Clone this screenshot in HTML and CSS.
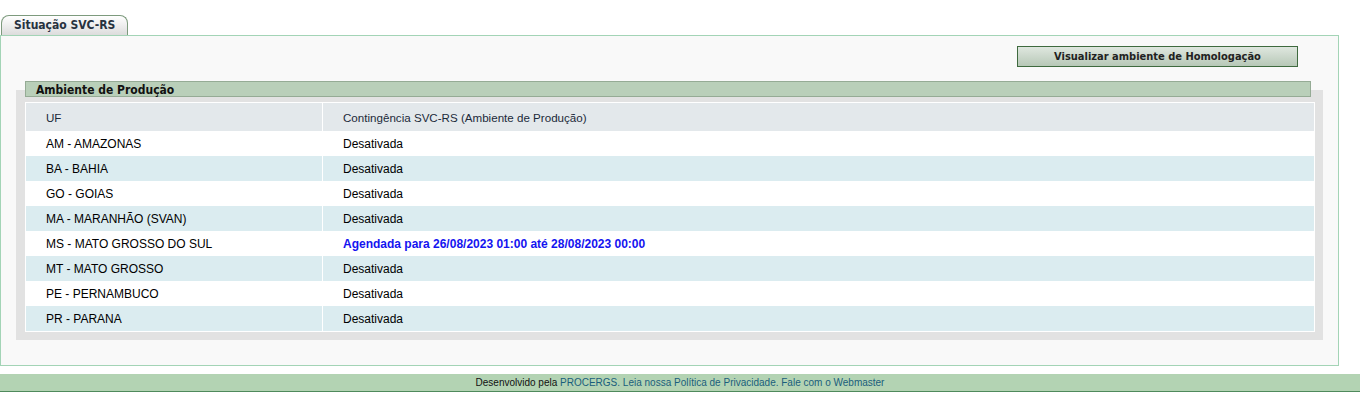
FILE: index.html
```html
<!DOCTYPE html>
<html lang="pt-BR">
<head>
  <meta charset="UTF-8">
  <title>Situação SVC-RS</title>
  <link rel="stylesheet" href="styles.css">
</head>
<body>

  <!-- Aba -->
  <div class="tabs">
    <span class="tab">Situação SVC-RS</span>
  </div>

  <div class="panel">
    <div class="actions">
      <button class="btn">Visualizar ambiente de Homologação</button>
    </div>

    <!-- Ambiente de Producao -->
    <div class="section">
      <div class="section-title">Ambiente de Produção</div>
      <div class="frame">
        <table class="grid">
          <thead>
            <tr>
              <th class="col-uf">UF</th>
              <th>Contingência SVC-RS (Ambiente de Produção)</th>
            </tr>
          </thead>
          <tbody>
            <tr><td>AM - AMAZONAS</td><td>Desativada</td></tr>
            <tr class="alt"><td>BA - BAHIA</td><td>Desativada</td></tr>
            <tr><td>GO - GOIAS</td><td>Desativada</td></tr>
            <tr class="alt"><td>MA - MARANHÃO (SVAN)</td><td>Desativada</td></tr>
            <tr><td>MS - MATO GROSSO DO SUL</td><td class="scheduled">Agendada para 26/08/2023 01:00 até 28/08/2023 00:00</td></tr>
            <tr class="alt"><td>MT - MATO GROSSO</td><td>Desativada</td></tr>
            <tr><td>PE - PERNAMBUCO</td><td>Desativada</td></tr>
            <tr class="alt"><td>PR - PARANA</td><td>Desativada</td></tr>
          </tbody>
        </table>
      </div>
    </div>
  </div>

  <div class="footer">
    Desenvolvido pela <a href="#">PROCERGS. Leia nossa Política de Privacidade. Fale com o Webmaster</a>
  </div>

</body>
</html>
```

FILE: styles.css
```css
body {
  margin: 0;
  font-family: "Liberation Sans", Arial, sans-serif;
  font-size: 12px;
  background: #fff;
}

.tabs {
  padding: 15px 0 0 1px;
  height: 20px;
}

.tab {
  display: inline-block;
  box-sizing: border-box;
  height: 20px;
  padding: 2px 12px 0 12px;
  border: 1px solid #7d9a7d;
  border-bottom: none;
  border-radius: 8px 8px 0 0;
  background: linear-gradient(#ffffff, #dcdcdc);
  font-family: "DejaVu Sans Condensed", "DejaVu Sans", Verdana, sans-serif;
  font-stretch: condensed;
  font-size: 12px;
  font-weight: bold;
  color: #27323f;
}

.panel {
  margin-right: 21px;
  height: 329px;
  border: 1px solid #a3d4b6;
  background: #f9f9f9;
}

.actions {
  display: flex;
  justify-content: flex-end;
  padding: 10px 40px 0 0;
}

.btn {
  width: 281px;
  height: 21px;
  border: 1px solid #3f6a3f;
  background: linear-gradient(#dfe7df, #b7c8b7);
  font-family: "DejaVu Sans Condensed", "DejaVu Sans", Verdana, sans-serif;
  font-stretch: condensed;
  font-size: 11px;
  font-weight: bold;
  color: #222;
  padding: 0;
  cursor: pointer;
}

.section {
  margin: 14px 15px 0 15px;
}

.section-title {
  position: relative;
  margin: 0 12px 0 9px;
  height: 14px;
  padding-left: 10px;
  border: 1px solid #95ab95;
  background: #b9cfb9;
  font-family: "DejaVu Sans Condensed", "DejaVu Sans", Verdana, sans-serif;
  font-stretch: condensed;
  font-size: 12px;
  font-weight: bold;
  line-height: 16px;
  color: #111;
}

.frame {
  margin-top: -7px;
  padding: 12px 8px 8px 9px;
  background: #e2e2e2;
}

.grid {
  width: 100%;
  border-collapse: collapse;
  border: 1px solid #fff;
}

.grid th,
.grid td {
  border-left: 1px solid #fff;
  border-right: 1px solid #fff;
  padding: 0 0 0 20px;
  text-align: left;
}

.grid th {
  height: 28px;
  background: #e3e8eb;
  font-size: 11.6px;
  font-weight: normal;
  color: #1b2a3a;
}

.grid .col-uf {
  width: 276px;
}

.grid td {
  height: 25px;
  background: #fff;
  color: #000;
}

.grid tr.alt td {
  background: #dbecf0;
}

.grid td.scheduled {
  color: #1414f0;
  font-weight: bold;
}

.footer {
  margin-top: 8px;
  height: 17px;
  border-bottom: 1px solid #4f8a5c;
  background: #b3d3b3;
  text-align: center;
  font-size: 10px;
  line-height: 18px;
  color: #111;
}

.footer a {
  color: #1a5e7c;
  text-decoration: none;
}
```
